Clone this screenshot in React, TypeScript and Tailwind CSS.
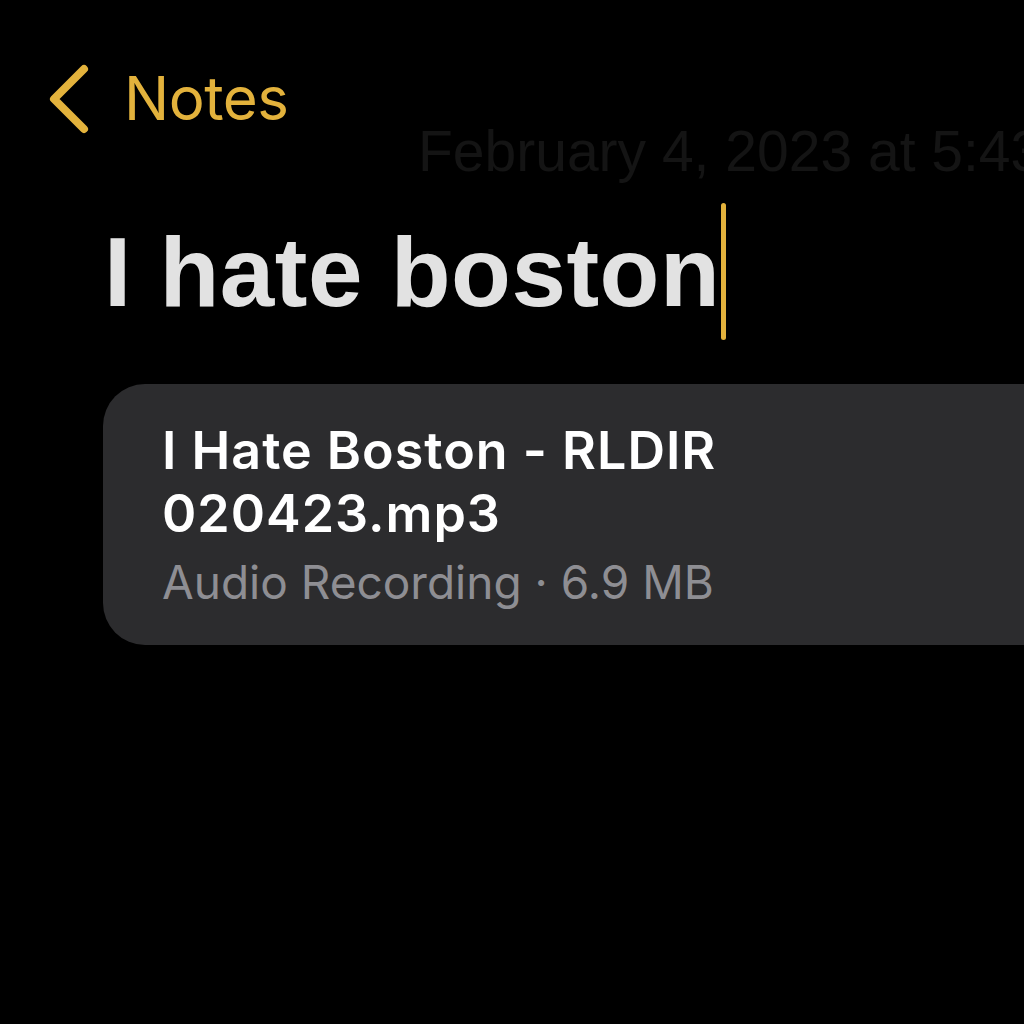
export default function App() {
  return (
    <div className="w-screen h-screen overflow-hidden bg-black font-['Inter',sans-serif]">
      <div className="flex items-start gap-[34px] pl-[48px] pt-[62px] h-[136px]">
        <svg width="42" height="70" viewBox="0 0 42 70" className="mt-[2px]">
          <path
            d="M36 5 L6 35 L36 65"
            fill="none"
            stroke="#e3b23c"
            strokeWidth="8"
            strokeLinecap="round"
            strokeLinejoin="round"
          />
        </svg>
        <span className="text-[60px] leading-[72px] tracking-[-0.5px] text-[#e3b23c]">Notes</span>
      </div>
      <div className="pl-[418px] -mt-[17px] whitespace-nowrap overflow-hidden text-[57px] leading-[64px] text-[#141414] font-['Liberation_Sans',sans-serif]">
        February 4, 2023 at 5:43 PM
      </div>
      <div className="flex items-center pl-[104px] mt-[20px] h-[137px]">
        <span className="text-[98px] leading-none font-bold text-[#e2e2e2] font-['Liberation_Sans',sans-serif] tracking-[0.5px]">
          I hate boston
        </span>
        <span className="w-[5px] h-[137px] rounded-full bg-[#e3b23c] ml-[1px]" />
      </div>
      <div className="ml-[103px] mt-[44px] w-[1000px] h-[261px] rounded-l-[42px] bg-[#2c2c2e] pl-[59px] pt-[35px]">
        <div className="text-[52px] leading-[63px] font-semibold tracking-[1px] text-white">
          I Hate Boston - RLDIR
          <br />
          020423.mp3
        </div>
        <div className="text-[46px] leading-[74px] text-[#8e8e93]">Audio Recording · 6.9 MB</div>
      </div>
    </div>
  );
}
